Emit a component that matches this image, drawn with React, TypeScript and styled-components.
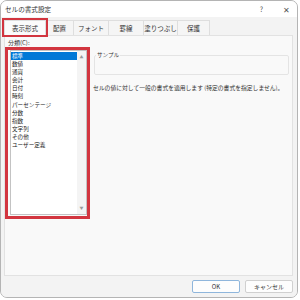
import React from 'react';
import styled, { createGlobalStyle } from 'styled-components';

const categories = [
  '標準',
  '数値',
  '通貨',
  '会計',
  '日付',
  '時刻',
  'パーセンテージ',
  '分数',
  '指数',
  '文字列',
  'その他',
  'ユーザー定義',
];

const tabs = [
  { label: '表示形式', width: 42 },
  { label: '配置', width: 29 },
  { label: 'フォント', width: 36 },
  { label: '罫線', width: 36 },
  { label: '塗りつぶし', width: 35 },
  { label: '保護', width: 33 },
];

const GlobalStyle = createGlobalStyle`
  html, body {
    margin: 0;
    background: #ffffff;
    font-family: 'Noto Sans CJK JP', 'Noto Sans', sans-serif;
    color: #1f1f1f;
  }
`;

const App: React.FC = () => {
  return (
    <>
      <GlobalStyle />
      <Window>
        <TitleBar>
          <span className='title'>セルの書式設定</span>
          <span className='ctrl'>?</span>
          <span className='ctrl close'>✕</span>
        </TitleBar>
        <Body>
          <TabStrip>
            {tabs.map((t, i) => (
              <Tab key={t.label} $width={t.width} $active={i === 0}>
                {t.label}
              </Tab>
            ))}
          </TabStrip>
          <Panel>
            <LeftColumn>
              <FieldLabel>分類(C):</FieldLabel>
              <RedFrame>
                <ListBox>
                  <Items>
                    {categories.map((c, i) => (
                      <Item key={c} $selected={i === 0}>
                        {c}
                      </Item>
                    ))}
                  </Items>
                  <ScrollBar>
                    <span>▲</span>
                    <span>▼</span>
                  </ScrollBar>
                </ListBox>
              </RedFrame>
            </LeftColumn>
            <RightColumn>
              <SampleGroup>
                <legend>サンプル</legend>
              </SampleGroup>
              <Description>
                セルの値に対して一般の書式を適用します (特定の書式を指定しません)。
              </Description>
            </RightColumn>
          </Panel>
          <Footer>
            <Button $primary>OK</Button>
            <Button>キャンセル</Button>
          </Footer>
        </Body>
      </Window>
    </>
  );
};

export default App;

const Window = styled.div`
  width: 298px;
  height: 298px;
  box-sizing: border-box;
  border: 1px solid #b4b4b4;
  border-radius: 7px;
  overflow: hidden;
  background: #efefef;
  display: flex;
  flex-direction: column;
`;

const TitleBar = styled.div`
  height: 16px;
  flex-shrink: 0;
  background: #ffffff;
  display: flex;
  align-items: center;
  padding: 0 7px 0 4px;
  font-size: 6.6px;
  color: #333;
  .title {
    flex: 1;
  }
  .ctrl {
    font-size: 7px;
    color: #555;
  }
  .close {
    font-size: 8px;
    margin-left: 20px;
  }
`;

const Body = styled.div`
  flex: 1;
  display: flex;
  flex-direction: column;
  padding: 0 4px 0 3px;
  background: #f3f3f3;
`;

const TabStrip = styled.div`
  display: flex;
  height: 15px;
  margin-top: 3px;
  padding-left: 1px;
`;

const Tab = styled.div<{ $width: number; $active?: boolean }>`
  width: ${p => p.$width}px;
  box-sizing: border-box;
  display: flex;
  align-items: center;
  justify-content: center;
  font-size: 6.5px;
  color: #333;
  background: ${p => (p.$active ? '#fbfbfb' : '#f5f5f5')};
  border: 1px solid #dedede;
  border-bottom: none;
  margin-left: -1px;
  ${p =>
    p.$active &&
    `
    outline: 2.5px solid #d2353f;
    outline-offset: 0px;
    position: relative;
    z-index: 1;
  `}
`;

const Panel = styled.div`
  height: 241px;
  box-sizing: border-box;
  background: #f9f9f9;
  border: 1px solid #e2e2e2;
  display: flex;
`;

const LeftColumn = styled.div`
  width: 86px;
  display: flex;
  flex-direction: column;
`;

const FieldLabel = styled.div`
  font-size: 6px;
  line-height: 8px;
  margin: 3px 0 0 3px;
  color: #333;
`;

const RedFrame = styled.div`
  width: 85px;
  height: 172px;
  box-sizing: border-box;
  border: 3px solid #d2353f;
  padding: 0 0 1px 2px;
  display: flex;
`;

const ListBox = styled.div`
  flex: 1;
  display: flex;
  background: #ffffff;
  border: 1px solid #c3c3c3;
`;

const Items = styled.div`
  flex: 1;
  padding-top: 1px;
`;

const Item = styled.div<{ $selected?: boolean }>`
  height: 8.1px;
  line-height: 8.1px;
  font-size: 5.6px;
  padding-left: 1px;
  white-space: nowrap;
  color: ${p => (p.$selected ? '#ffffff' : '#222')};
  background: ${p => (p.$selected ? '#0078d7' : 'transparent')};
`;

const ScrollBar = styled.div`
  width: 9px;
  background: #f4f4f4;
  display: flex;
  flex-direction: column;
  justify-content: space-between;
  align-items: center;
  padding: 3px 0 3px;
  span {
    font-size: 4px;
    color: #9a9a9a;
  }
`;

const RightColumn = styled.div`
  flex: 1;
  display: flex;
  flex-direction: column;
  padding: 16px 3px 0 2px;
`;

const SampleGroup = styled.fieldset`
  height: 23px;
  box-sizing: border-box;
  margin: 0 0 0 1px;
  padding: 0;
  border: 1px solid #e4e4e4;
  border-radius: 2px;
  legend {
    font-size: 5.6px;
    color: #333;
    margin-left: 1px;
    padding: 0 1px;
    line-height: 7px;
  }
`;

const Description = styled.div`
  margin-top: 9px;
  font-size: 5.8px;
  line-height: 8px;
  white-space: nowrap;
  color: #333;
`;

const Footer = styled.div`
  flex: 1;
  display: flex;
  align-items: center;
  justify-content: flex-end;
  gap: 5px;
`;

const Button = styled.div<{ $primary?: boolean }>`
  width: 48px;
  height: 13px;
  box-sizing: border-box;
  display: flex;
  align-items: center;
  justify-content: center;
  font-size: 6px;
  color: #333;
  background: #fdfdfd;
  border: 1px solid ${p => (p.$primary ? '#8fb6dc' : '#d0d0d0')};
  border-radius: 2px;
`;
